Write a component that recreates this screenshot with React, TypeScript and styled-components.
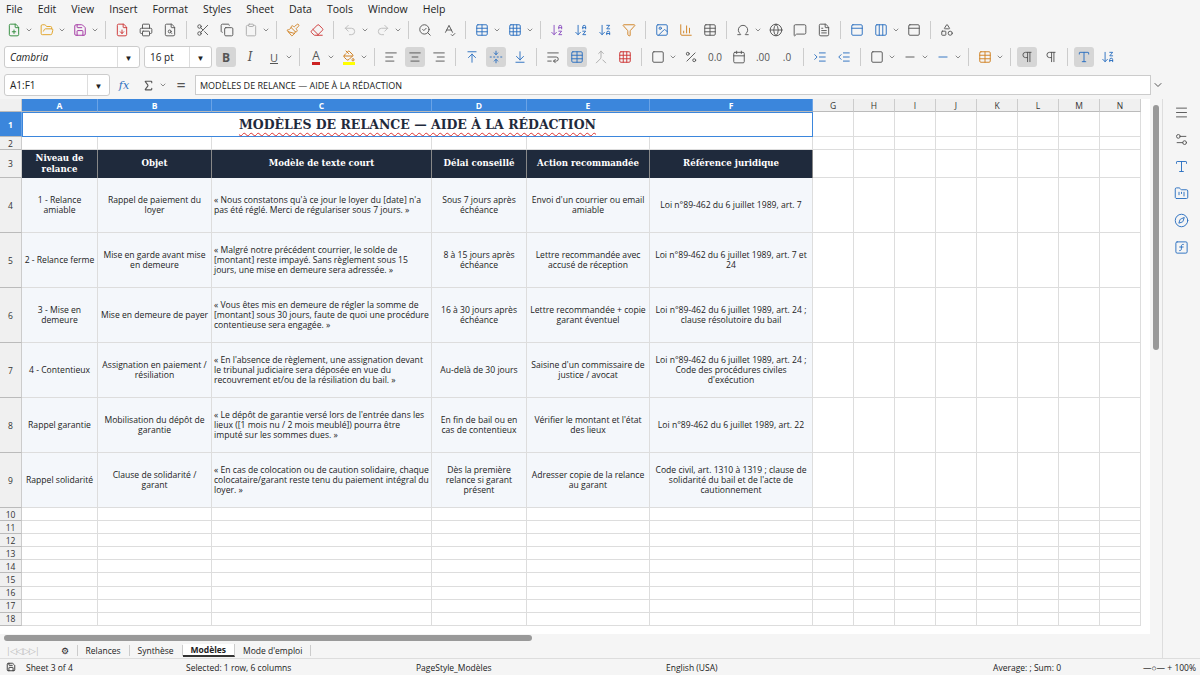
import React from "react";
import styled, { createGlobalStyle } from "styled-components";
import {
  FilePlus, FolderOpen, Save, FileDown, Printer, FileSearch, Scissors, Copy, Clipboard, Paintbrush, Eraser,
  Undo2, Redo2, SearchCheck, SpellCheck, Table, Grid3x3, ArrowDownAZ, ArrowDownZA, Filter, Image, BarChart3,
  Sigma, Omega, Globe, MessageSquare, FileText, Columns3, PanelTop, Shapes, ChevronDown,
  AlignLeft, AlignCenter, AlignRight, ArrowUpToLine, FoldVertical, ArrowDownToLine, WrapText, Merge,
  Percent, Calendar, Indent, Outdent, Square, Minus, PaintBucket, Pilcrow, Menu, Settings2, Type, FolderKanban, Compass, FunctionSquare, Save as SaveIco,
} from "lucide-react";

const G = createGlobalStyle`
  body{margin:0;font-family:"Open Sans","Liberation Sans",sans-serif;background:#f4f4f4;overflow:hidden;}
  *{box-sizing:border-box;}
`;
const Page = styled.div`width:1200px;height:675px;display:flex;flex-direction:column;background:#f5f5f5;color:#222;`;
const MenuBar = styled.div`height:17px;display:flex;align-items:center;gap:15px;padding-left:6px;font-size:10.5px;`;
const ToolRow = styled.div<{h:number}>`height:${p=>p.h}px;display:flex;align-items:center;gap:4px;padding-left:4px;`;
const Btn = styled.span<{on?:boolean;c?:string}>`width:20px;height:20px;display:inline-flex;align-items:center;justify-content:center;border-radius:3px;
  background:${p=>p.on?"#d6d6d6":"transparent"};color:${p=>p.c||"#555"};`;
const Sep = styled.span`width:1px;height:18px;background:#ccc;margin:0 2px;`;
const Caret = styled(ChevronDown)`width:8px;height:8px;color:#555;margin-left:-3px;`;
const Combo = styled.div<{w:number}>`width:${p=>p.w}px;height:22px;border:1px solid #ccc;background:#fff;border-radius:3px;display:flex;align-items:center;
  font-size:10px;padding-left:5px;justify-content:space-between;`;
const ComboArrow = styled.span`width:22px;height:100%;border-left:1px solid #ddd;display:flex;align-items:center;justify-content:center;font-size:8px;`;
const FormulaInput = styled.div`flex:1;height:20px;border:1px solid #ccc;background:#fff;font-size:9px;display:flex;align-items:center;padding-left:4px;`;
const Body = styled.div`display:flex;flex:1;min-height:0;`;
const SheetArea = styled.div`flex:1;display:flex;flex-direction:column;min-width:0;`;
const Grid = styled.div`display:grid;grid-template-columns:22px 76px 114px 220px 95px 123px 163px repeat(8,41px);
  grid-template-rows:13px 25px 13px 28px repeat(6,55px) repeat(9,13.1px);background:#fff;height:540px;overflow:hidden;width:1150px;`;
const ColH = styled.div<{sel?:boolean}>`background:${p=>p.sel?"#3b86dc":"#f0f0f0"};color:${p=>p.sel?"#fff":"#333"};font-size:8.5px;display:flex;align-items:center;justify-content:center;
  border-right:1px solid ${p=>p.sel?"#6aa3e6":"#ccc"};border-bottom:1px solid #bbb;font-weight:${p=>p.sel?700:400};`;
const RowH = styled(ColH)``;
const Cell = styled.div<{bg?:string}>`background:${p=>p.bg||"#fff"};border-right:1px solid #ddd;border-bottom:1px solid #ddd;font-size:8.6px;
  display:flex;align-items:center;justify-content:center;text-align:center;padding:0 2px;line-height:1.2;color:#222;`;
const LeftCell = styled(Cell)`justify-content:flex-start;text-align:left;`;
const Title = styled.div`grid-column:2 / span 6;border:1px solid #3b86dc;display:flex;align-items:center;justify-content:center;
  font-family:"DejaVu Serif",serif;font-weight:700;font-size:12.5px;color:#1f2a3c;text-decoration:underline wavy #d33 1px;text-underline-offset:3px;`;
const Head = styled.div`background:#1f2a3c;color:#fff;font-family:"DejaVu Serif",serif;font-weight:700;font-size:8.6px;display:flex;align-items:center;
  justify-content:center;text-align:center;border-right:1px solid #888;line-height:1.3;`;
const HScroll = styled.div`height:8px;display:flex;align-items:center;padding:0 4px;`;
const Thumb = styled.div`width:528px;height:6px;background:#999;border-radius:3px;`;
const Tabs = styled.div`height:16px;display:flex;align-items:center;font-size:8.5px;gap:0;padding-left:6px;`;
const Tab = styled.span<{on?:boolean}>`padding:0 8px;border-right:1px solid #ccc;${p=>p.on?"font-weight:700;border-bottom:2px solid #333;background:#fff;":""}`;
const Status = styled.div`height:17px;display:grid;grid-template-columns:180px 230px 250px 165px 250px 1fr;align-items:center;font-size:8.5px;padding-left:6px;border-top:1px solid #ddd;`;
const VScroll = styled.div`width:12px;display:flex;justify-content:center;padding-top:6px;`;
const VThumb = styled.div`width:6px;height:245px;background:#999;border-radius:3px;`;
const Side = styled.div`width:38px;border-left:1px solid #ddd;display:flex;flex-direction:column;align-items:center;gap:12px;padding-top:6px;`;

const I = (C:any, c?:string, on?:boolean) => <Btn on={on} c={c}><C size={14} strokeWidth={1.6}/></Btn>;
const cols = ["A","B","C","D","E","F","G","H","I","J","K","L","M","N"];
const rows = [
  ["1 - Relance amiable","Rappel de paiement du loyer","« Nous constatons qu'à ce jour le loyer du [date] n'a pas été réglé. Merci de régulariser sous 7 jours. »","Sous 7 jours après échéance","Envoi d'un courrier ou email amiable","Loi n°89-462 du 6 juillet 1989, art. 7"],
  ["2 - Relance ferme","Mise en garde avant mise en demeure","« Malgré notre précédent courrier, le solde de [montant] reste impayé. Sans règlement sous 15 jours, une mise en demeure sera adressée. »","8 à 15 jours après échéance","Lettre recommandée avec accusé de réception","Loi n°89-462 du 6 juillet 1989, art. 7 et 24"],
  ["3 - Mise en demeure","Mise en demeure de payer","« Vous êtes mis en demeure de régler la somme de [montant] sous 30 jours, faute de quoi une procédure contentieuse sera engagée. »","16 à 30 jours après échéance","Lettre recommandée + copie garant éventuel","Loi n°89-462 du 6 juillet 1989, art. 24 ; clause résolutoire du bail"],
  ["4 - Contentieux","Assignation en paiement / résiliation","« En l'absence de règlement, une assignation devant le tribunal judiciaire sera déposée en vue du recouvrement et/ou de la résiliation du bail. »","Au-delà de 30 jours","Saisine d'un commissaire de justice / avocat","Loi n°89-462 du 6 juillet 1989, art. 24 ; Code des procédures civiles d'exécution"],
  ["Rappel garantie","Mobilisation du dépôt de garantie","« Le dépôt de garantie versé lors de l'entrée dans les lieux ([1 mois nu / 2 mois meublé]) pourra être imputé sur les sommes dues. »","En fin de bail ou en cas de contentieux","Vérifier le montant et l'état des lieux","Loi n°89-462 du 6 juillet 1989, art. 22"],
  ["Rappel solidarité","Clause de solidarité / garant","« En cas de colocation ou de caution solidaire, chaque colocataire/garant reste tenu du paiement intégral du loyer. »","Dès la première relance si garant présent","Adresser copie de la relance au garant","Code civil, art. 1310 à 1319 ; clause de solidarité du bail et de l'acte de cautionnement"],
];
const heads = ["Niveau de relance","Objet","Modèle de texte court","Délai conseillé","Action recommandée","Référence juridique"];

export default function App(){
  const blanks = (n:number, bg?:string) => Array.from({length:n},(_,i)=><Cell key={"b"+i} bg={bg}/>);
  return <Page><G/>
    <MenuBar>{["File","Edit","View","Insert","Format","Styles","Sheet","Data","Tools","Window","Help"].map(m=><span key={m}>{m}</span>)}</MenuBar>
    <ToolRow h={26}>
      {I(FilePlus,"#2e8b3a")}<Caret/>{I(FolderOpen,"#e0a020")}<Caret/>{I(Save,"#a030a0")}<Caret/><Sep/>
      {I(FileDown,"#c33")}{I(Printer)}{I(FileSearch)}<Sep/>{I(Scissors)}{I(Copy)}{I(Clipboard,"#aaa")}<Caret/><Sep/>
      {I(Paintbrush,"#d08020")}{I(Eraser,"#c33")}<Sep/>{I(Undo2,"#bbb")}<Caret/>{I(Redo2,"#bbb")}<Caret/><Sep/>
      {I(SearchCheck)}{I(SpellCheck)}<Sep/>{I(Table,"#2a6fc0")}<Caret/>{I(Grid3x3,"#2a6fc0")}<Caret/><Sep/>
      {I(ArrowDownAZ,"#8a4fc0")}{I(ArrowDownAZ,"#2a6fc0")}{I(ArrowDownZA,"#2a6fc0")}{I(Filter,"#d08020")}<Sep/>
      {I(Image,"#2a6fc0")}{I(BarChart3,"#d08020")}{I(Table)}<Sep/>{I(Omega)}<Caret/>{I(Globe)}{I(MessageSquare)}{I(FileText)}<Sep/>
      {I(PanelTop,"#2a6fc0")}{I(Columns3,"#2a6fc0")}<Caret/>{I(PanelTop)}<Sep/>{I(Shapes)}
    </ToolRow>
    <ToolRow h={28}>
      <Combo w={136}><i style={{fontSize:10}}>Cambria</i><ComboArrow>▼</ComboArrow></Combo>
      <Combo w={68}>16 pt<ComboArrow>▼</ComboArrow></Combo>
      <Btn on><b style={{fontSize:12}}>B</b></Btn><Btn><i style={{fontSize:12,fontFamily:"DejaVu Serif"}}>I</i></Btn><Btn><u style={{fontSize:11}}>U</u></Btn><Caret/><Sep/>
      <Btn><span style={{fontSize:12,borderBottom:"3px solid #c22",lineHeight:"12px"}}>A</span></Btn><Caret/>
      <Btn c="#d08020"><span style={{borderBottom:"3px solid #ff0",lineHeight:"12px"}}><PaintBucket size={12}/></span></Btn><Caret/><Sep/>
      {I(AlignLeft)}{I(AlignCenter,undefined,true)}{I(AlignRight)}<Sep/>{I(ArrowUpToLine,"#2a6fc0")}{I(FoldVertical,"#2a6fc0",true)}{I(ArrowDownToLine,"#2a6fc0")}<Sep/>
      {I(WrapText)}{I(Table,"#2a6fc0",true)}{I(Merge,"#aaa")}{I(Grid3x3,"#c33")}<Sep/>{I(Square)}<Caret/>{I(Percent)}<Btn style={{fontSize:10}}>0.0</Btn>{I(Calendar)}<Btn style={{fontSize:10}}>.00</Btn><Btn style={{fontSize:10}}>.0</Btn><Sep/>
      {I(Indent,"#2a6fc0")}{I(Outdent,"#2a6fc0")}<Sep/>{I(Square)}<Caret/>{I(Minus)}<Caret/>{I(Minus,"#2a6fc0")}<Caret/><Sep/>{I(Table,"#d08020")}<Caret/><Sep/>
      {I(Pilcrow,undefined,true)}{I(Pilcrow)}<Sep/>{I(Type,"#2a6fc0",true)}{I(ArrowDownZA,"#2a6fc0")}
    </ToolRow>
    <ToolRow h={28} style={{paddingRight:36}}>
      <Combo w={106}>A1:F1<ComboArrow>▼</ComboArrow></Combo>
      <Btn c="#2a6fc0"><i style={{fontFamily:"DejaVu Serif",fontSize:11}}>fx</i></Btn><Btn><Sigma size={13}/></Btn><Caret/><Btn>=</Btn>
      <FormulaInput>MODÈLES DE RELANCE — AIDE À LA RÉDACTION</FormulaInput><Caret style={{width:12,height:12}}/>
    </ToolRow>
    <Body>
      <SheetArea>
        <Grid>
          <ColH/>{cols.map((c,i)=><ColH key={c} sel={i<6}>{c}</ColH>)}
          <RowH sel>1</RowH><Title>MODÈLES DE RELANCE — AIDE À LA RÉDACTION</Title>{blanks(8)}
          <RowH>2</RowH>{blanks(14)}
          <RowH>3</RowH>{heads.map(h=><Head key={h}>{h}</Head>)}{blanks(8)}
          {rows.map((r,ri)=><React.Fragment key={ri}>
            <RowH>{ri+4}</RowH>
            {r.map((t,ci)=>ci===2?<LeftCell key={ci} bg="#f4f7fb">{t}</LeftCell>:<Cell key={ci} bg="#f4f7fb">{t}</Cell>)}
            {blanks(8)}
          </React.Fragment>)}
          {Array.from({length:9},(_,i)=><React.Fragment key={"r"+i}><RowH>{i+10}</RowH>{blanks(14)}</React.Fragment>)}
        </Grid>
        <HScroll><Thumb/></HScroll>
        <Tabs><span style={{color:"#bbb",letterSpacing:-1,marginRight:14}}>|◁◁ ▷▷|</span><Tab>⚙</Tab><Tab>Relances</Tab><Tab>Synthèse</Tab><Tab on>Modèles</Tab><Tab>Mode d'emploi</Tab></Tabs>
      </SheetArea>
      <VScroll><VThumb/></VScroll>
      <Side>{[Menu,Settings2,Type,FolderKanban,Compass,FunctionSquare].map((C,i)=><C key={i} size={15} color={i>1?"#2a6fc0":"#555"} strokeWidth={1.5}/>)}</Side>
    </Body>
    <Status>
      <span style={{display:"flex",gap:10,alignItems:"center"}}><SaveIco size={10}/>Sheet 3 of 4</span>
      <span>Selected: 1 row, 6 columns</span><span>PageStyle_Modèles</span><span>English (USA)</span>
      <span style={{textAlign:"right",paddingRight:20}}>Average: ; Sum: 0</span>
      <span style={{textAlign:"right",paddingRight:4}}>—○— + 100%</span>
    </Status>
  </Page>;
}
